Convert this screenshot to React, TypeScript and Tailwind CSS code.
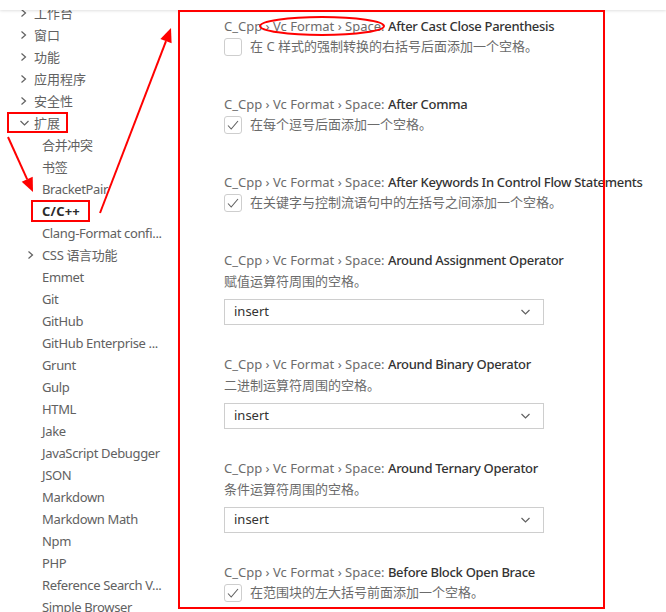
import React from "react";

const FONT = { fontFamily: '"Noto Sans", "Noto Sans CJK SC", sans-serif' };

function ChevronRight() {
  return (
    <svg width="16" height="16" viewBox="0 0 16 16" className="shrink-0">
      <path d="M3.5 4.5l4 3.5-4 3.5" fill="none" stroke="#616161" strokeWidth="1.2" />
    </svg>
  );
}
function ChevronDown() {
  return (
    <svg width="16" height="16" viewBox="0 0 16 16" className="shrink-0">
      <path d="M2.5 6l4 4 4-4" fill="none" stroke="#616161" strokeWidth="1.2" />
    </svg>
  );
}

type NavItem = { label: string; level: "top" | "child" | "childExp"; open?: boolean; bold?: boolean };

const nav: NavItem[] = [
  { label: "工作台", level: "top" },
  { label: "窗口", level: "top" },
  { label: "功能", level: "top" },
  { label: "应用程序", level: "top" },
  { label: "安全性", level: "top" },
  { label: "扩展", level: "top", open: true },
  { label: "合并冲突", level: "child" },
  { label: "书签", level: "child" },
  { label: "BracketPair", level: "child" },
  { label: "C/C++", level: "child", bold: true },
  { label: "Clang-Format confi...", level: "child" },
  { label: "CSS 语言功能", level: "childExp" },
  { label: "Emmet", level: "child" },
  { label: "Git", level: "child" },
  { label: "GitHub", level: "child" },
  { label: "GitHub Enterprise ...", level: "child" },
  { label: "Grunt", level: "child" },
  { label: "Gulp", level: "child" },
  { label: "HTML", level: "child" },
  { label: "Jake", level: "child" },
  { label: "JavaScript Debugger", level: "child" },
  { label: "JSON", level: "child" },
  { label: "Markdown", level: "child" },
  { label: "Markdown Math", level: "child" },
  { label: "Npm", level: "child" },
  { label: "PHP", level: "child" },
  { label: "Reference Search V...", level: "child" },
  { label: "Simple Browser", level: "child" },
];

function NavRow({ item }: { item: NavItem }) {
  if (item.level === "top") {
    return (
      <div className="h-[22px] flex items-center pl-[18px] whitespace-nowrap">
        {item.open ? <ChevronDown /> : <ChevronRight />}
        <span>{item.label}</span>
      </div>
    );
  }
  if (item.level === "childExp") {
    return (
      <div className="h-[22px] flex items-center pl-[25px] whitespace-nowrap">
        <ChevronRight />
        <span className="ml-[1px] tracking-[-0.35px]">{item.label}</span>
      </div>
    );
  }
  return (
    <div
      className={
        "h-[22px] flex items-center pl-[42px] whitespace-nowrap " +
        (item.bold ? "font-bold text-[#2b2b2b] tracking-[0.2px]" : "tracking-[-0.35px]")
      }
    >
      {item.label}
    </div>
  );
}

function Title({ name }: { name: string }) {
  return (
    <div className="h-[20px] leading-[20px] whitespace-nowrap">
      <span className="text-[#6c6c6c]">C_Cpp › Vc Format › Space: </span>
      <span className="text-[#333333] font-medium tracking-[-0.3px]">{name}</span>
    </div>
  );
}

function CheckItem({ name, desc, checked, mb }: { name: string; desc: string; checked: boolean; mb: string }) {
  return (
    <div className={"flex flex-col " + mb}>
      <Title name={name} />
      <div className="mt-[2px] flex items-center h-[18px]">
        <div className="w-[18px] h-[18px] border border-[#cecece] rounded-[3px] bg-white flex items-center justify-center shrink-0">
          {checked && (
            <svg width="16" height="16" viewBox="0 0 16 16">
              <path d="M3 8.5l3.2 3.5 6.8-8" fill="none" stroke="#616161" strokeWidth="1.1" />
            </svg>
          )}
        </div>
        <span className="ml-[8px] text-[#6b6b6b] whitespace-nowrap">{desc}</span>
      </div>
    </div>
  );
}

function SelectItem({ name, desc }: { name: string; desc: string }) {
  return (
    <div className="flex flex-col mb-[29px]">
      <Title name={name} />
      <div className="mt-[1px] h-[20px] leading-[20px] text-[#6b6b6b] whitespace-nowrap">{desc}</div>
      <div className="mt-[8px] w-[320px] h-[26px] border border-[#cecece] bg-white flex items-center justify-between pl-[9px] pr-[8px]">
        <span className="text-[#333333]">insert</span>
        <ChevronDown />
      </div>
    </div>
  );
}

export default function App() {
  return (
    <div className="relative w-[666px] h-[612px] overflow-hidden bg-white text-[13px]" style={FONT}>
      <div className="flex">
        <nav className="w-[178px] shrink-0 pt-[2px] text-[#616161] leading-[22px]">
          {nav.map((n) => (
            <NavRow key={n.label} item={n} />
          ))}
        </nav>
        <main className="pl-[46px] pt-[16px] flex flex-col">
          <CheckItem
            name="After Cast Close Parenthesis"
            desc="在 C 样式的强制转换的右括号后面添加一个空格。"
            checked={false}
            mb="mb-[38px]"
          />
          <CheckItem
            name="After Comma"
            desc="在每个逗号后面添加一个空格。"
            checked={true}
            mb="mb-[38px]"
          />
          <CheckItem
            name="After Keywords In Control Flow Statements"
            desc="在关键字与控制流语句中的左括号之间添加一个空格。"
            checked={true}
            mb="mb-[38px]"
          />
          <SelectItem name="Around Assignment Operator" desc="赋值运算符周围的空格。" />
          <SelectItem name="Around Binary Operator" desc="二进制运算符周围的空格。" />
          <SelectItem name="Around Ternary Operator" desc="条件运算符周围的空格。" />
          <CheckItem
            name="Before Block Open Brace"
            desc="在范围块的左大括号前面添加一个空格。"
            checked={true}
            mb="mb-[38px]"
          />
        </main>
      </div>

      {/* sticky header shadow */}
      <div className="absolute left-0 top-0 w-full h-[10px] bg-white shadow-[0_1px_3px_rgba(0,0,0,0.12)]" />

      {/* annotations */}
      <svg className="absolute inset-0 pointer-events-none" width="666" height="612" viewBox="0 0 666 612">
        <g fill="none" stroke="#ff0000" strokeWidth="2">
          <rect x="179" y="11" width="425" height="597" />
          <rect x="8" y="113" width="59" height="19" />
          <rect x="32" y="201" width="57" height="20" />
          <ellipse cx="322" cy="26" rx="62" ry="9" />
          <line x1="8" y1="137" x2="27.2" y2="179.3" />
          <line x1="100" y1="213" x2="166" y2="41.1" />
        </g>
        <g fill="#ff0000">
          <polygon points="33,192 21.7,181.8 32.7,176.8" />
          <polygon points="171,28 171.6,43.3 160.4,39" />
        </g>
      </svg>
    </div>
  );
}
